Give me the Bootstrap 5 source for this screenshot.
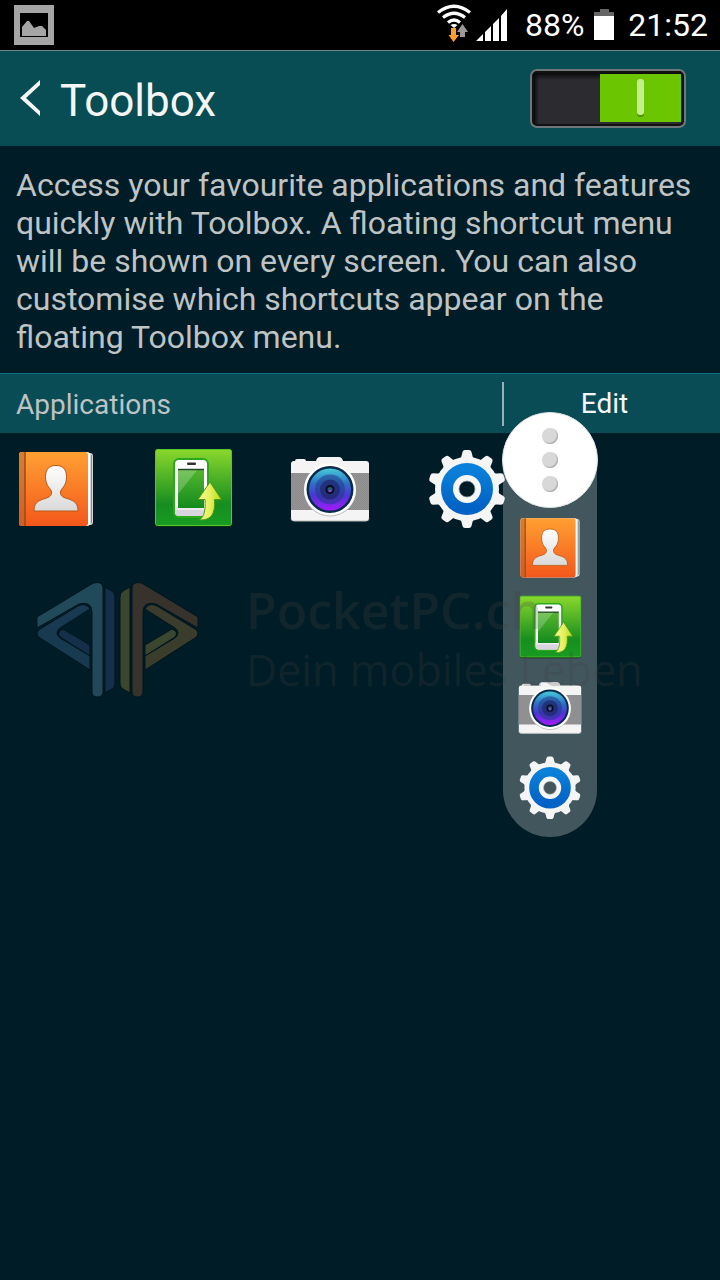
<!DOCTYPE html>
<html lang="en">
<head>
<meta charset="utf-8">
<meta name="viewport" content="width=device-width, initial-scale=1">
<title>Toolbox</title>
<link href="https://cdn.jsdelivr.net/npm/bootstrap@5.3.0/dist/css/bootstrap.min.css" rel="stylesheet">
<style>
  body { font-family: Roboto, "Noto Sans", sans-serif; background: #001c26; color: #bfc3c4; }
  svg { display: block; flex: none; }
  .screen { min-height: 100vh; overflow: hidden; }
  .status-bar { height: 50px; background: #000; color: #fff; font-size: 32px; line-height: 52px; padding: 0 12px 0 14px; }
  .title-bar { height: 96px; background: #074d53; border-top: 1px solid #6d8a8e; padding: 0 34px 0 18px; }
  .title-bar h1 { font-size: 44px; line-height: 54px; color: #f5f5f5; font-weight: 400; }
  .back-link { color: #f5f5f5; gap: 19px; }
  .power-switch { appearance: none; width: 156px; height: 59px; margin: 0; border: 2px solid #6f7779; border-radius: 7px; cursor: pointer;
    background: url("data:image/svg+xml,%3Csvg xmlns='http://www.w3.org/2000/svg' width='81' height='48'%3E%3Crect width='81' height='48' fill='%236bc500'/%3E%3Crect x='37' y='7' width='7' height='36' rx='3' fill='%234c9200'/%3E%3Crect x='37' y='5' width='7' height='36' rx='3' fill='%23c3ee8c'/%3E%3C/svg%3E") 68px 3px / 81px 48px no-repeat,
                linear-gradient(#000, transparent 9px), linear-gradient(90deg, #000, transparent 7px), #2b2b30;
    box-shadow: inset 0 0 0 2px #111; }
  .intro { font-size: 32px; line-height: 38px; padding: 20px 16px 17px; }
  .section-bar { height: 60px; background: #094c56; border-top: 1px solid #10717d; padding: 0 15px 0 16px; }
  .section-bar h2, .section-bar button { font-size: 28px; line-height: 44px; font-weight: 400; }
  .section-bar h2 { padding-top: 2px; }
  .edit-area { width: 203px; height: 44px; border-left: 2px solid #9bb0b4; }
  .edit-area button { color: #f5f5f5; }
  .app-grid { gap: 57px; padding: 15px 16px; }
  .app-grid svg { width: 80px; height: 80px; }
  .brand-area { padding: 32px 30px; gap: 36px; position: relative; z-index: 3; pointer-events: none; }
  .brand-text { font-family: "Open Sans", "Noto Sans", sans-serif; color: rgba(70, 65, 65, .24); white-space: nowrap; padding-top: 5px; }
  .brand-name { font-size: 50px; line-height: 60px; font-weight: 600; }
  .brand-claim { font-size: 43px; line-height: 60px; }
  .floating-toolbox { position: absolute; top: 412px; right: 122px; width: 96px; z-index: 2; }
  .handle { width: 96px; height: 96px; border-radius: 50%; background: #fff; border: 1px solid #dfe3e4; position: relative; z-index: 1; gap: 8px; }
  .handle i { width: 16px; height: 16px; border-radius: 50%; background: #d8d8d8; box-shadow: inset -1px -1px 1px #aaa; }
  .tray { width: 94px; margin-top: -48px; padding: 55px 0 18px; gap: 16px; border-radius: 0 0 47px 47px; background: rgba(255, 255, 255, .26); }
  .tray svg { width: 64px; height: 64px; }
</style>
</head>
<body>
<svg width="0" height="0" class="position-absolute" aria-hidden="true">
  <defs>
    <linearGradient id="orange" x2="0" y2="1"><stop stop-color="#ffa032"/><stop offset="1" stop-color="#f4571b"/></linearGradient>
    <linearGradient id="silver" x2="0" y2="1"><stop stop-color="#fff"/><stop offset="1" stop-color="#d9d9d9"/></linearGradient>
    <linearGradient id="green" x2="0" y2="1"><stop stop-color="#8ad82c"/><stop offset=".72" stop-color="#178d20"/><stop offset="1" stop-color="#189c22"/></linearGradient>
    <linearGradient id="glass" x2="0" y2="1"><stop stop-color="#55b62e"/><stop offset="1" stop-color="#138b1e"/></linearGradient>
    <linearGradient id="lime" x2="1"><stop stop-color="#f6fb8e"/><stop offset=".5" stop-color="#e6f060"/><stop offset="1" stop-color="#b2dc0d"/></linearGradient>
    <linearGradient id="lens" x2="0" y2="1"><stop stop-color="#45cbd9"/><stop offset=".35" stop-color="#2f72c4"/><stop offset=".65" stop-color="#4b35d2"/><stop offset="1" stop-color="#a61bff"/></linearGradient>
    <linearGradient id="blue" x2="0" y2="1"><stop stop-color="#0980d9"/><stop offset="1" stop-color="#0362c5"/></linearGradient>
    <pattern id="weave" width="2" height="2" patternUnits="userSpaceOnUse"><rect width="2" height="2" fill="#949494"/><path d="M0 0h1v1H0zM1 1h1v1H1z" fill="#8c8c8c"/></pattern>
    <symbol id="contacts" viewBox="0 0 80 80">
      <rect x="60" y="5" width="17" height="72" rx="3" fill="#d5d5d5"/><path d="M75.500 7v68" stroke="#888"/>
      <rect x="3" y="4" width="71" height="74" rx="3" fill="#fff"/>
      <rect x="3" y="4" width="69" height="74" rx="3" fill="url(#orange)"/>
      <path d="M6 4h3v74H6a3 3 0 0 1-3-3V7a3 3 0 0 1 3-3z" fill="#b5652b" opacity=".55"/><path d="M9 4v74" stroke="#9b4a1c" stroke-width="1.500"/>
      <path d="M40 17.500c-7 0-10.500 4-10.500 11 0 5 1 8 3.500 11 2 2.500 3 4 2.500 6-.5 3-3 4-8 5.500C21 53 18 56 18 63h44c0-7-3-10-9.500-12-5-1.500-7.500-2.500-8-5.500-.5-2 .5-3.500 2.500-6 2.500-3 3.500-6 3.500-11 0-7-3.500-11-10.500-11z" fill="url(#silver)" stroke="#b55a18"/>
    </symbol>
    <symbol id="transfer" viewBox="0 0 80 80">
      <rect x="2" y="2" width="77" height="77" rx="3" fill="#082a18"/>
      <rect x="2.500" y="1.500" width="76" height="76" rx="2" fill="url(#green)" stroke="#58c629"/>
      <rect x="21" y="11" width="34" height="58" rx="5" fill="#fff" stroke="#2ba81c" stroke-width="2"/>
      <path d="M22 60h32v4q0 4-4 4H26q-4 0-4-4z" fill="#d9d5df"/><path d="M22 61h32" stroke="#fff"/>
      <rect x="25" y="21" width="26" height="39" fill="url(#glass)"/><path d="M25 21h20L25 46z" fill="#fff" opacity=".22"/>
      <path d="M25 21.500h26" stroke="#24442b" stroke-width="1.500"/><rect x="34" y="14.500" width="9" height="2.500" rx="1" fill="#333"/>
      <path d="M57 34 68.500 51.500h-7c1 14-3 21-15 20.500 5-4 6-9 5.500-20.500H45z" fill="url(#lime)" stroke="#4f9818"/>
    </symbol>
    <symbol id="camera" viewBox="0 0 80 80">
      <path d="M1 16q0-3 3-3h1q0-2 2-2h7q2 0 2 2h10q1-4 4-4h19q3 0 4 4h23q3 0 3 3v54q0 3-3 3H4q-3 0-3-3z" fill="#f4f4f4"/>
      <path d="M1 25h78v37H1z" fill="url(#weave)"/><path d="M1 70q0 3 3 3h72q3 0 3-3" fill="none" stroke="#bbb"/>
      <circle cx="40" cy="42.500" r="26" fill="#bbb"/><circle cx="40" cy="41.500" r="26" fill="#fff"/><circle cx="40" cy="41.500" r="23.500" fill="#082b4d"/>
      <circle cx="40" cy="41.500" r="21" fill="url(#lens)"/><circle cx="40" cy="41.500" r="15" fill="#20388a" opacity=".55"/><circle cx="40" cy="41.500" r="10" fill="#202668" opacity=".7"/>
      <circle cx="40" cy="41.500" r="4.500" fill="#080d22"/><circle cx="40" cy="41.500" r="2.500" fill="#28577e"/><circle cx="40" cy="43" r="1.300" fill="#8c44d0"/>
    </symbol>
    <path id="tooth" d="M30 12q4-1 4.500-4L35.500 4q.5-2 2.500-2h4q2 0 2.500 2L45.500 8q.5 3 4.500 4z"/>
    <symbol id="settings" viewBox="0 0 80 80">
      <g fill="#f5f5f5">
        <use href="#tooth"/><use href="#tooth" transform="rotate(36 40 41)"/><use href="#tooth" transform="rotate(72 40 41)"/><use href="#tooth" transform="rotate(108 40 41)"/><use href="#tooth" transform="rotate(144 40 41)"/>
        <use href="#tooth" transform="rotate(180 40 41)"/><use href="#tooth" transform="rotate(216 40 41)"/><use href="#tooth" transform="rotate(252 40 41)"/><use href="#tooth" transform="rotate(288 40 41)"/><use href="#tooth" transform="rotate(324 40 41)"/>
        <circle cx="40" cy="41" r="27" fill="none" stroke="#f5f5f5" stroke-width="10"/>
      </g>
      <circle cx="40" cy="41" r="19" fill="none" stroke="url(#blue)" stroke-width="14"/>
      <circle cx="40" cy="41" r="11" fill="none" stroke="#f8f8f8" stroke-width="6"/>
      <circle cx="40" cy="41" r="8" fill="none" stroke="#8b989c" opacity=".7"/>
    </symbol>
    <path id="ribbon-outer" d="M7 53V42L60 10q3-2.500 7-2.500 6 0 6 6v103q0 5.500-5.500 5.500T62 116.500V37q0-11-13-8z"/>
    <path id="ribbon-middle" d="M7 58q0-2 3-4L48 31q8-4 12 3L30 53q-6 5 0 10l30 18v14L10 63q-3-2-3-5z"/>
    <path id="ribbon-inner" d="M30 62q-4-5 3-8l27 16v11z"/>
    <path id="ribbon-side" d="M75 12l7 4q3 2 3 6v87q0 3-3 5l-7 4z"/>
  </defs>
</svg>

<div class="screen position-relative">
  <div class="status-bar d-flex align-items-center">
    <svg width="40" height="40" viewBox="0 0 40 40" role="img" aria-label="Screenshot saved"><path fill="#a5a5a5" d="M0 0h40v40H0z"/><path fill="#000" d="M6 8h28v24H6z"/><path fill="#a5a5a5" d="M8 31V22l5-6h2l5 7 5-2h3l4 4v6z"/></svg>
    <svg class="ms-auto" width="34" height="42" viewBox="0 0 34 42" role="img" aria-label="Wi-Fi">
      <g fill="none" stroke="#fff" stroke-width="3.200"><path d="M1 8.500q16-12.500 32 0M6 13.500q11-8.500 22 0M11 18.500q6-5 12 0"/></g>
      <path d="m13.500 21q3.500-2 7 0L17 24z" fill="#fff"/><path d="M14 24h5v7h3l-5.500 7-5-7H14z" fill="#ff9d2e"/><path d="m25.500 20 5.500 8h-3v5h-5v-5h-3z" fill="#999"/>
    </svg>
    <svg class="ms-1" width="34" height="34" viewBox="0 0 34 34" role="img" aria-label="Signal"><path fill="#fff" d="M1 33 8 26v7zM10 24l6-6v15h-6zM18 16l6-6v23h-6zM26 8l6-7v32h-6z"/></svg>
    <span class="ps-3">88%</span>
    <svg class="ms-2" width="24" height="32" viewBox="0 0 24 32" role="img" aria-label="Battery"><path fill="#666" d="M8 0h9v3h5v5H2V3h6z"/><path fill="#fff" d="M2 7h20v24H2z"/></svg>
    <span class="ps-2 ms-1">21:52</span>
  </div>

  <header class="title-bar d-flex align-items-center justify-content-between">
    <a href="#" class="back-link d-flex align-items-center text-decoration-none">
      <svg width="23" height="38" viewBox="0 0 23 38" aria-hidden="true"><path d="M22 0v5L8 18l14 13v5L2 18z" fill="#f5f5f5"/></svg>
      <h1 class="m-0 pt-1">Toolbox</h1>
    </a>
    <input class="power-switch" type="checkbox" role="switch" aria-label="Toolbox on" checked>
  </header>

  <main>
    <p class="intro m-0">Access your favourite applications and features quickly with Toolbox. A floating shortcut menu will be shown on every screen. You can also customise which shortcuts appear on the floating Toolbox menu.</p>
    <div class="section-bar d-flex align-items-center justify-content-between">
      <h2 class="m-0">Applications</h2>
      <div class="edit-area d-flex"><button type="button" class="btn border-0 p-0 w-100">Edit</button></div>
    </div>
    <div class="app-grid d-flex">
      <svg role="img" aria-label="Contacts"><use href="#contacts"/></svg>
      <svg role="img" aria-label="Transfer"><use href="#transfer"/></svg>
      <svg role="img" aria-label="Camera"><use href="#camera"/></svg>
      <svg role="img" aria-label="Settings"><use href="#settings"/></svg>
    </div>
    <div class="brand-area d-flex align-items-start">
      <svg width="180" height="130" viewBox="0 0 180 130" aria-hidden="true">
        <g stroke="#00151d" stroke-width="1">
          <use href="#ribbon-inner" fill="#132f49"/><use href="#ribbon-middle" fill="#183a50"/><use href="#ribbon-side" fill="#132f49"/><use href="#ribbon-outer" fill="#204a5a"/>
        </g>
        <g stroke="#00151d" stroke-width="1" transform="translate(175) scale(-1 1)">
          <use href="#ribbon-inner" fill="#3a462d"/><use href="#ribbon-middle" fill="#3a3d2c"/><use href="#ribbon-side" fill="#3a462d"/><use href="#ribbon-outer" fill="#37322c"/>
        </g>
      </svg>
      <div class="brand-text"><div class="brand-name">PocketPC.ch</div><div class="brand-claim">Dein mobiles Leben</div></div>
    </div>
  </main>

  <aside class="floating-toolbox d-flex flex-column align-items-center" aria-label="Toolbox shortcuts">
    <button type="button" class="handle d-flex flex-column align-items-center justify-content-center p-0" aria-label="Close toolbox"><i></i><i></i><i></i></button>
    <div class="tray d-flex flex-column align-items-center">
      <svg role="img" aria-label="Contacts"><use href="#contacts"/></svg>
      <svg role="img" aria-label="Transfer"><use href="#transfer"/></svg>
      <svg role="img" aria-label="Camera"><use href="#camera"/></svg>
      <svg role="img" aria-label="Settings"><use href="#settings"/></svg>
    </div>
  </aside>
</div>
<script src="https://cdn.jsdelivr.net/npm/bootstrap@5.3.0/dist/js/bootstrap.bundle.min.js"></script>
</body>
</html>
